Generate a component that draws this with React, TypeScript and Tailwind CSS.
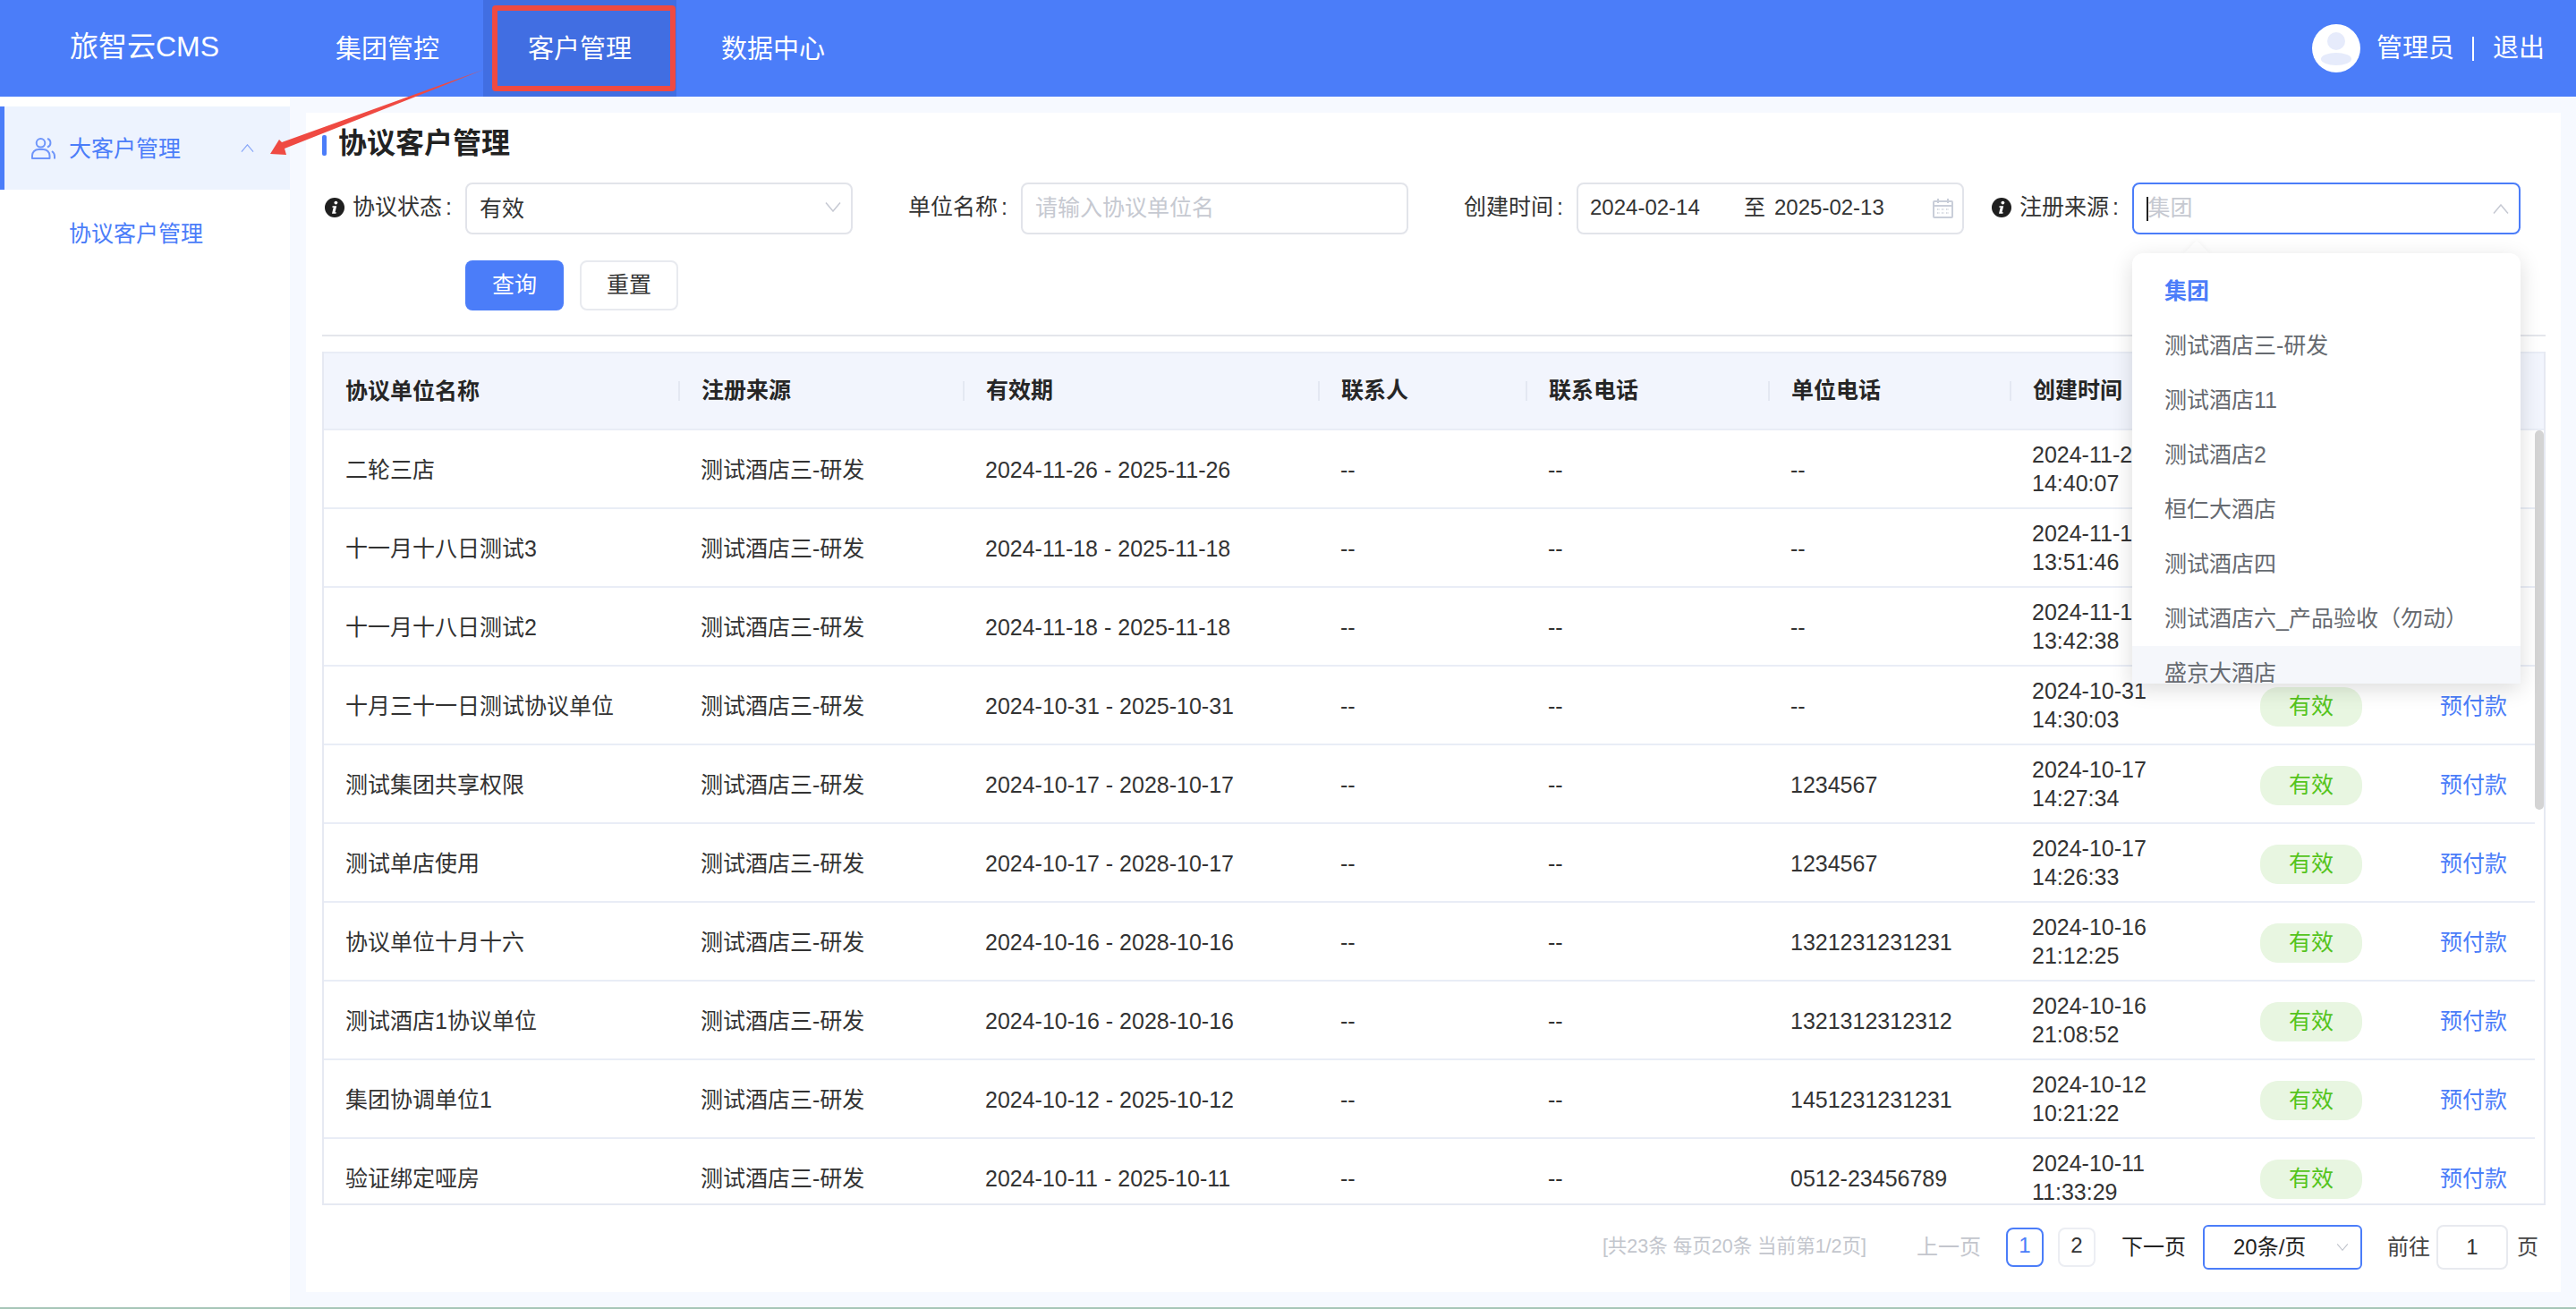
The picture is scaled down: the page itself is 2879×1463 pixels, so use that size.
const rows = [
  ['二轮三店', '2024-11-26 - 2025-11-26', '--', '2024-11-26', '14:40:07'],
  ['十一月十八日测试3', '2024-11-18 - 2025-11-18', '--', '2024-11-18', '13:51:46'],
  ['十一月十八日测试2', '2024-11-18 - 2025-11-18', '--', '2024-11-18', '13:42:38'],
  ['十月三十一日测试协议单位', '2024-10-31 - 2025-10-31', '--', '2024-10-31', '14:30:03'],
  ['测试集团共享权限', '2024-10-17 - 2028-10-17', '1234567', '2024-10-17', '14:27:34'],
  ['测试单店使用', '2024-10-17 - 2028-10-17', '1234567', '2024-10-17', '14:26:33'],
  ['协议单位十月十六', '2024-10-16 - 2028-10-16', '1321231231231', '2024-10-16', '21:12:25'],
  ['测试酒店1协议单位', '2024-10-16 - 2028-10-16', '1321312312312', '2024-10-16', '21:08:52'],
  ['集团协调单位1', '2024-10-12 - 2025-10-12', '1451231231231', '2024-10-12', '10:21:22'],
  ['验证绑定哑房', '2024-10-11 - 2025-10-11', '0512-23456789', '2024-10-11', '11:33:29'],
];

const headers = ['协议单位名称', '注册来源', '有效期', '联系人', '联系电话', '单位电话', '创建时间', '', ''];
const sources = ['测试酒店三-研发', '测试酒店11', '测试酒店2', '桓仁大酒店', '测试酒店四', '测试酒店六_产品验收（勿动）'];
const colsClass = 'grid grid-cols-[396px_318px_397px_232px_271px_270px_254px_201px_132px]';

const Chevron = ({ up = false, className = 'w-[18px] h-[11px]' }: { up?: boolean; className?: string }) => (
  <svg viewBox="0 0 18 11" className={className} fill="none" stroke="currentColor" strokeWidth="1.5">
    <polyline points={up ? '1,10.5 9,1 17,10.5' : '1,0.5 9,10 17,0.5'} />
  </svg>
);

const InfoIcon = () => (
  <svg viewBox="0 0 22 22" className="w-[22px] h-[22px] shrink-0">
    <circle cx="11" cy="11" r="11" fill="#1f1f1f" />
    <circle cx="12.4" cy="5.6" r="1.9" fill="#fff" />
    <path d="M8.6 9.2h4.6l-1.7 7h1.3l-.4 1.6H8l1.7-7H8.3z" fill="#fff" />
  </svg>
);

const Label = ({ text, info = false }: { text: string; info?: boolean }) => (
  <div className="w-[160px] pr-[15px] flex items-center justify-end gap-[9px] text-[#333] -mt-[2px]">
    {info && <InfoIcon />}
    <span>
      {text}
      <span className="ml-[4px]">:</span>
    </span>
  </div>
);

const App = () => {
  return (
    <div className="relative h-screen min-h-[1463px] flex flex-col bg-[#f6f9ff] text-[25px] text-[#333] overflow-hidden [font-family:'Liberation_Sans','Noto_Sans_CJK_SC',sans-serif]">
      {/* 顶部导航 */}
      <header className="h-[108px] shrink-0 bg-[#4b7df9] flex items-center text-white">
        <div className="pl-[78px] text-[32px] mb-[4px] w-[325px]">旅智云CMS</div>
        <nav className="flex h-full text-[29px]">
          <div className="w-[215px] pl-[50px] pt-[3px] flex items-center">集团管控</div>
          <div className="relative w-[216px] pl-[50px] pt-[3px] flex items-center bg-[#416ee2]">
            客户管理
            <div className="absolute left-[10px] right-[1px] top-[6px] bottom-[6px] border-[6px] border-[#ef4a42] rounded-[4px]" />
          </div>
          <div className="w-[216px] pl-[50px] pt-[3px] flex items-center">数据中心</div>
        </nav>
        <div className="ml-auto pr-[35px] flex items-center text-[29px]">
          <svg viewBox="0 0 54 54" className="w-[54px] h-[54px]">
            <clipPath id="ava"><circle cx="27" cy="27" r="27" /></clipPath>
            <circle cx="27" cy="27" r="27" fill="#fff" />
            <g clipPath="url(#ava)" fill="#e6ebfb">
              <ellipse cx="27" cy="19" rx="10" ry="10" />
              <ellipse cx="27" cy="39" rx="17" ry="7" />
            </g>
          </svg>
          <span className="ml-[18px] pt-[2px]">管理员</span>
          <span className="ml-[20px] w-[2px] h-[27px] bg-white" />
          <span className="ml-[21px] pt-[2px]">退出</span>
        </div>
      </header>

      <div className="flex flex-1 min-h-0">
        {/* 侧边栏 */}
        <aside className="w-[324px] shrink-0 bg-white pt-[11px]">
          <div className="h-[93px] border-l-[5px] border-[#4b7df9] bg-[#edf3fe] pl-[30px] flex items-center text-[#4b7df9]">
            <svg viewBox="0 0 27 24" className="w-[27px] h-[24px] shrink-0" fill="none" stroke="#6f96fa" strokeWidth="2">
              <circle cx="10.5" cy="5.8" r="4.8" />
              <path d="M1 23v-3a7 7 0 0 1 7-7h5.5a7 7 0 0 1 7 7v3z" strokeLinejoin="round" />
              <path d="M18 1a5 5 0 0 1 0 9.5" />
              <path d="M26 23.5v-2.5a7 7 0 0 0-3-6" />
            </svg>
            <span className="ml-[15px] pt-[2px]">大客户管理</span>
            <Chevron up className="ml-[66px] w-[17px] h-[9px] text-[#8aa8f8]" />
          </div>
          <div className="pl-[77px] mt-[31px] leading-[36px] text-[#4b7df9]">协议客户管理</div>
        </aside>

        {/* 主内容 */}
        <main className="flex-1 min-w-0 pl-[18px] pt-[18px] pr-[17px] pb-[17px]">
          <div className="h-full bg-white pl-[18px] pr-[17px] flex flex-col">
            <div className="h-[68px] mb-[10px] flex items-center">
              <span className="w-[5px] h-[23px] bg-[#4b7df9] rounded-[2px] mt-[4px]" />
              <h1 className="ml-[13px] text-[32px] font-bold text-[#222]">协议客户管理</h1>
            </div>

            {/* 筛选 */}
            <div className="flex h-[58px] gap-[28px]">
              <div className="flex">
                <Label text="协议状态" info />
                <div className="w-[433px] h-[58px] border-2 border-[#e2e4ea] rounded-[8px] pl-[14px] pr-[11px] flex items-center justify-between">
                  <span className="pt-[2px]">有效</span>
                  <Chevron className="w-[18px] h-[11px] text-[#c6c9d3] -mt-[4px]" />
                </div>
              </div>
              <div className="flex">
                <Label text="单位名称" />
                <div className="w-[433px] h-[58px] border-2 border-[#e2e4ea] rounded-[8px] px-[14px] flex items-center">
                  <input readOnly placeholder="请输入协议单位名" className="w-full outline-none placeholder:text-[#c6c9d1]" />
                </div>
              </div>
              <div className="flex">
                <Label text="创建时间" />
                <div className="w-[433px] h-[58px] border-2 border-[#e2e4ea] rounded-[8px] pl-[13px] pr-[10px] flex items-center text-[24px]">
                  <span className="w-[172px] -mt-[2px]">2024-02-14</span>
                  <span className="w-[34px] -mt-[2px]">至</span>
                  <span className="-mt-[2px]">2025-02-13</span>
                  <svg viewBox="0 0 23 22" className="ml-auto w-[23px] h-[22px]" fill="none" stroke="#c9ced9" strokeWidth="2">
                    <rect x="1" y="3" width="21" height="18" rx="1" />
                    <path d="M1 8h21M6 0v5M17 0v5" />
                    <path d="M5 12h3M10 12h3M15 12h3M5 16h3M10 16h3M15 16h3" strokeWidth="1.6" strokeDasharray="1.5 1" />
                  </svg>
                </div>
              </div>
              <div className="flex relative z-20">
                <Label text="注册来源" info />
                <div className="relative w-[434px] h-[58px]">
                  <div className="h-full border-2 border-[#4b7df9] rounded-[8px] pl-[14px] pr-[11px] flex items-center justify-between">
                    <div className="flex items-center text-[#c6c9d1]">
                      <span className="w-[1.5px] h-[27px] bg-[#222]" />
                      <span>集团</span>
                    </div>
                    <Chevron up className="w-[18px] h-[11px] text-[#c6c9d3]" />
                  </div>
                  {/* 下拉 */}
                  <div className="absolute left-[62px] top-[69px] w-[20px] h-[20px] rotate-45 bg-white shadow-[0_0_6px_rgba(0,0,0,0.05)]" />
                  <div className="absolute left-0 right-0 top-[79px] h-[481px] bg-white rounded-t-[12px] rounded-b-[2px] shadow-[0_6px_24px_rgba(0,0,0,0.14)] overflow-hidden pt-[12px]">
                    <div className="h-[61px] pl-[36px] flex items-center font-bold text-[#4b7df9]">集团</div>
                    {sources.map((s) => (
                      <div key={s} className="h-[61px] pl-[36px] flex items-center text-[#666a70]">{s}</div>
                    ))}
                    <div className="h-[61px] pl-[36px] flex items-center text-[#666a70] bg-[#f5f7fb]">盛京大酒店</div>
                  </div>
                </div>
              </div>
            </div>

            <div className="flex gap-[18px] ml-[160px] mt-[29px]">
              <button className="w-[110px] h-[56px] rounded-[8px] bg-[#4b7df9] text-white">查询</button>
              <button className="w-[110px] h-[56px] rounded-[8px] border-2 border-[#e8eaef] bg-white text-[#333]">重置</button>
            </div>

            <div className="h-[2px] bg-[#e4e6eb] mt-[27px] mb-[17px]" />

            {/* 表格 */}
            <div className="relative h-[954px] shrink-0 border-x-2 border-b-2 border-[#e6e9f2] overflow-hidden">
              <div className="h-[88px] bg-[#f2f5fd] border-y-2 border-[#e9edf6]">
                <div className={colsClass + ' w-[2471px] h-full items-center font-bold text-[#262626]'}>
                  {headers.map((h, i) =>
                    h ? (
                      <div key={h} className={i === 0 ? 'pl-[24px] pt-[2px]' : 'pl-[24px] border-l-2 border-[#e4e8f2] h-[22px] flex items-center'}>
                        <span>{h}</span>
                      </div>
                    ) : (
                      <div key={i} />
                    ),
                  )}
                </div>
              </div>
              {rows.map((r) => (
                <div key={r[0]} className={colsClass + ' w-[2471px] h-[88px] shrink-0 items-center border-b-2 border-[#e9edf6] pt-[3px]'}>
                  <div className="pl-[24px]">{r[0]}</div>
                  <div className="pl-[25px]">测试酒店三-研发</div>
                  <div className="pl-[25px]">{r[1]}</div>
                  <div className="pl-[25px]">--</div>
                  <div className="pl-[25px]">--</div>
                  <div className="pl-[25px]">{r[2]}</div>
                  <div className="pl-[25px] leading-[32px] -mt-[3px]">
                    <div>{r[3]}</div>
                    <div>{r[4]}</div>
                  </div>
                  <div className="pl-[26px]">
                    <span className="w-[114px] h-[44px] rounded-[20px] bg-[#e8f6e1] text-[#55c41c] flex items-center justify-center">有效</span>
                  </div>
                  <div className="pl-[26px] text-[#4b7df9]">预付款</div>
                </div>
              ))}
              <div className="absolute right-0 top-[88px] w-[10px] h-[424px] bg-[#d4d4d4] rounded-[5px]" />
            </div>

            {/* 分页 */}
            <div className="flex-1 flex items-center justify-end pr-[8px] -mt-[4px] text-[24px]">
              <span className="text-[21.5px] text-[#c3c6cd]">[共23条 每页20条 当前第1/2页]</span>
              <span className="ml-[56px] text-[#c3c6cd]">上一页</span>
              <span className="ml-[28px] w-[42px] h-[44px] border-2 border-[#4b7df9] rounded-[8px] text-[#4b7df9] flex items-center justify-center pb-[4px]">1</span>
              <span className="ml-[16px] w-[42px] h-[44px] border-2 border-[#eceef3] rounded-[8px] flex items-center justify-center pb-[4px]">2</span>
              <span className="ml-[29px] text-[#222]">下一页</span>
              <div className="ml-[19px] w-[178px] h-[50px] border-2 border-[#4b7df9] rounded-[6px] pl-[32px] pr-[13px] flex items-center justify-between text-[#222]">
                <span>20条/页</span>
                <Chevron className="w-[14px] h-[8px] text-[#c0c4cc]" />
              </div>
              <span className="ml-[28px] text-[#444]">前往</span>
              <span className="ml-[7px] w-[80px] h-[50px] border-2 border-[#e8eaef] rounded-[8px] flex items-center justify-center">1</span>
              <span className="ml-[10px] text-[#444]">页</span>
            </div>
          </div>
        </main>
      </div>
      <div className="h-[2px] shrink-0 bg-[#a7c6b8]" />

      {/* 标注箭头 */}
      <svg viewBox="0 0 600 200" className="absolute left-0 top-0 w-[600px] h-[200px] pointer-events-none z-30">
        <polygon points="540,78 315,159 312,156 302,172 320,173 318,166" fill="#ef4a42" />
      </svg>
    </div>
  );
};

export default App;
